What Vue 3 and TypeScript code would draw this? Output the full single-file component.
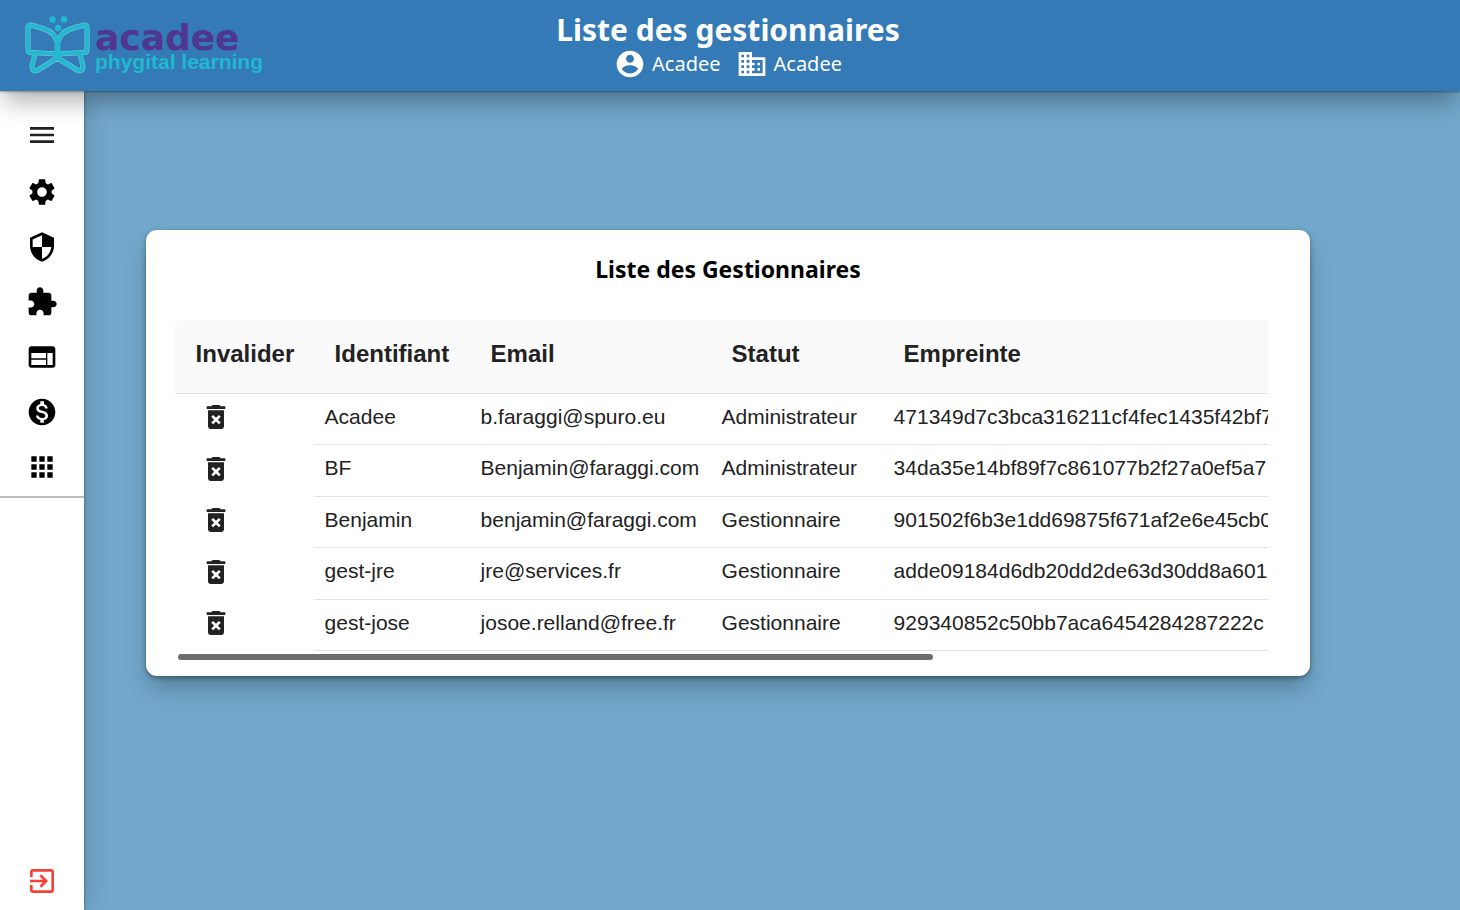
<script setup lang="ts">
import { computed, onBeforeUnmount, onMounted, ref } from 'vue'

interface Manager {
  id: string
  email: string
  status: string
  fingerprint: string
}

interface NavItem {
  label: string
  path: string
}

const navItems: NavItem[] = [
  {
    label: 'Paramètres',
    path: 'M19.14 12.94c.04-.3.06-.61.06-.94 0-.32-.02-.64-.07-.94l2.03-1.58c.18-.14.23-.41.12-.61l-1.92-3.32c-.12-.22-.37-.29-.59-.22l-2.39.96c-.5-.38-1.03-.7-1.62-.94l-.36-2.54c-.04-.24-.24-.41-.48-.41h-3.84c-.24 0-.43.17-.47.41l-.36 2.54c-.59.24-1.13.57-1.62.94l-2.39-.96c-.22-.08-.47 0-.59.22L2.74 8.87c-.12.21-.08.47.12.61l2.03 1.58c-.05.3-.09.63-.09.94s.02.64.07.94l-2.03 1.58c-.18.14-.23.41-.12.61l1.92 3.32c.12.22.37.29.59.22l2.39-.96c.5.38 1.03.7 1.62.94l.36 2.54c.05.24.24.41.48.41h3.84c.24 0 .44-.17.47-.41l.36-2.54c.59-.24 1.13-.56 1.62-.94l2.39.96c.22.08.47 0 .59-.22l1.92-3.32c.12-.22.07-.47-.12-.61l-2.01-1.58zM12 15.6c-1.98 0-3.6-1.62-3.6-3.6s1.62-3.6 3.6-3.6 3.6 1.62 3.6 3.6-1.62 3.6-3.6 3.6z',
  },
  {
    label: 'Sécurité',
    path: 'M12 1L3 5v6c0 5.55 3.84 10.74 9 12 5.16-1.26 9-6.45 9-12V5l-9-4zm0 10.99h7c-.53 4.12-3.28 7.79-7 8.94V12H5V6.3l7-3.11v8.8z',
  },
  {
    label: 'Extensions',
    path: 'M20.5 11H19V7c0-1.1-.9-2-2-2h-4V3.5C13 2.12 11.88 1 10.5 1S8 2.12 8 3.5V5H4c-1.1 0-1.99.9-1.99 2v3.8H3.5c1.49 0 2.7 1.21 2.7 2.7s-1.21 2.7-2.7 2.7H2V20c0 1.1.9 2 2 2h3.8v-1.5c0-1.49 1.21-2.7 2.7-2.7 1.49 0 2.7 1.21 2.7 2.7V22H17c1.1 0 2-.9 2-2v-4h1.5c1.38 0 2.5-1.12 2.5-2.5S21.88 11 20.5 11z',
  },
  {
    label: 'Pages',
    path: 'M20 4H4c-1.1 0-1.99.9-1.99 2L2 18c0 1.1.9 2 2 2h16c1.1 0 2-.9 2-2V6c0-1.1-.9-2-2-2zm-5 14H4v-4h11v4zm0-5H4V9h11v4zm5 5h-4V9h4v9z',
  },
  {
    label: 'Facturation',
    path: 'M12 2C6.48 2 2 6.48 2 12s4.48 10 10 10 10-4.48 10-10S17.52 2 12 2zm1.41 16.09V20h-2.67v-1.93c-1.71-.36-3.16-1.46-3.27-3.4h1.96c.1 1.05.82 1.87 2.65 1.87 1.96 0 2.4-.98 2.4-1.59 0-.83-.44-1.61-2.67-2.14-2.48-.6-4.18-1.62-4.18-3.67 0-1.72 1.39-2.84 3.11-3.21V4h2.67v1.95c1.86.45 2.79 1.86 2.85 3.39H14.3c-.05-1.11-.64-1.87-2.22-1.87-1.5 0-2.4.68-2.4 1.64 0 .84.65 1.39 2.67 1.91s4.18 1.39 4.18 3.91c-.01 1.83-1.38 2.83-3.12 3.16z',
  },
  {
    label: 'Applications',
    path: 'M4 8h4V4H4v4zm6 12h4v-4h-4v4zm-6 0h4v-4H4v4zm0-6h4v-4H4v4zm6 0h4v-4h-4v4zm6-10v4h4V4h-4zm-6 4h4V4h-4v4zm6 6h4v-4h-4v4zm0 6h4v-4h-4v4z',
  },
]

const managers: Manager[] = [
  { id: 'Acadee', email: 'b.faraggi@spuro.eu', status: 'Administrateur', fingerprint: '471349d7c3bca316211cf4fec1435f42bf7' },
  { id: 'BF', email: 'Benjamin@faraggi.com', status: 'Administrateur', fingerprint: '34da35e14bf89f7c861077b2f27a0ef5a7' },
  { id: 'Benjamin', email: 'benjamin@faraggi.com', status: 'Gestionnaire', fingerprint: '901502f6b3e1dd69875f671af2e6e45cb0' },
  { id: 'gest-jre', email: 'jre@services.fr', status: 'Gestionnaire', fingerprint: 'adde09184d6db20dd2de63d30dd8a601' },
  { id: 'gest-jose', email: 'josoe.relland@free.fr', status: 'Gestionnaire', fingerprint: '929340852c50bb7aca6454284287222c' },
]

const scroller = ref<HTMLElement | null>(null)
const visibleRatio = ref(1)
const offsetRatio = ref(0)

function measure(): void {
  const el = scroller.value
  if (!el) return
  visibleRatio.value = el.clientWidth / el.scrollWidth
  offsetRatio.value = el.scrollLeft / el.scrollWidth
}

const thumbStyle = computed(() => ({
  width: `${visibleRatio.value * 100}%`,
  marginLeft: `${offsetRatio.value * 100}%`,
}))

onMounted(() => {
  measure()
  window.addEventListener('resize', measure)
})
onBeforeUnmount(() => window.removeEventListener('resize', measure))
</script>

<template>
  <div class="page">
    <header class="topbar">
      <a class="logo" href="#" aria-label="Acadee phygital learning">
        <svg class="butterfly" viewBox="25 14 66 62" aria-hidden="true">
          <g class="wings halo">
            <path d="M57.5 54V42C56 34 51 30 43 27.500L31 24Q28 24 28 27V48Q28 51.500 31 51.500L57 53" />
            <path d="M57.5 54V42C59 34 64 30 72 27.500L84 24Q87 24 87 27V48Q87 51.500 84 51.500L58 53" />
            <path d="M35 53L32 65Q32 72 38 69L57.500 57L77 69Q83 72 83 65L80 53" />
          </g>
          <g class="wings">
            <path d="M57.5 54V42C56 34 51 30 43 27.500L31 24Q28 24 28 27V48Q28 51.500 31 51.500L57 53" />
            <path d="M57.5 54V42C59 34 64 30 72 27.500L84 24Q87 24 87 27V48Q87 51.500 84 51.500L58 53" />
            <path d="M35 53L32 65Q32 72 38 69L57.500 57L77 69Q83 72 83 65L80 53" />
          </g>
          <path class="body" d="M57.500 43V56" />
          <circle class="dot" cx="52.500" cy="18.500" r="3.200" />
          <circle class="dot" cx="64" cy="18.500" r="3.200" />
          <circle class="dot" cx="58" cy="27" r="3.200" />
        </svg>
        <span class="wordmark">
          <span class="brand">acadee</span>
          <span class="tagline">phygital learning</span>
        </span>
      </a>
      <div class="heading">
        <h1>Liste des gestionnaires</h1>
        <div class="identity">
          <span class="who">
            <svg class="icon" viewBox="0 0 24 24" aria-hidden="true">
              <path d="M12 2C6.480 2 2 6.480 2 12s4.480 10 10 10 10-4.480 10-10S17.520 2 12 2zm0 3c1.660 0 3 1.340 3 3s-1.340 3-3 3-3-1.340-3-3 1.340-3 3-3zm0 14.200c-2.500 0-4.710-1.280-6-3.220.03-1.990 4-3.080 6-3.080 1.990 0 5.970 1.090 6 3.080-1.290 1.940-3.500 3.220-6 3.220z" />
            </svg>
            Acadee
          </span>
          <span class="who">
            <svg class="icon" viewBox="0 0 24 24" aria-hidden="true">
              <path d="M12 7V3H2v18h20V7H12zM6 19H4v-2h2v2zm0-4H4v-2h2v2zm0-4H4V9h2v2zm0-4H4V5h2v2zm4 12H8v-2h2v2zm0-4H8v-2h2v2zm0-4H8V9h2v2zm0-4H8V5h2v2zm10 12h-8v-2h2v-2h-2v-2h2v-2h-2V9h8v10zm-2-8h-2v2h2v-2zm0 4h-2v2h2v-2z" />
            </svg>
            Acadee
          </span>
        </div>
      </div>
    </header>

    <nav class="sidebar" aria-label="Navigation">
      <button class="nav-button menu" type="button" aria-label="Menu">
        <svg class="icon" viewBox="0 0 24 24" aria-hidden="true">
          <path d="M3 18h18v-2H3v2zm0-5h18v-2H3v2zm0-7v2h18V6H3z" />
        </svg>
      </button>
      <div class="nav-group">
        <button v-for="item in navItems" :key="item.label" class="nav-button" type="button" :aria-label="item.label">
          <svg class="icon" viewBox="0 0 24 24" aria-hidden="true"><path :d="item.path" /></svg>
        </button>
      </div>
      <button class="nav-button logout" type="button" aria-label="Déconnexion">
        <svg class="icon" viewBox="0 0 24 24" aria-hidden="true">
          <path d="M10.090 15.590L11.500 17l5-5-5-5-1.410 1.410L12.670 11H3v2h9.670l-2.580 2.590zM19 3H5c-1.110 0-2 .9-2 2v4h2V5h14v14H5v-4H3v4c0 1.100.89 2 2 2h14c1.100 0 2-.9 2-2V5c0-1.100-.9-2-2-2z" />
        </svg>
      </button>
    </nav>

    <main class="content">
      <section class="card">
        <h2>Liste des Gestionnaires</h2>
        <div ref="scroller" class="scroller" @scroll="measure">
          <table>
            <thead>
              <tr>
                <th class="col-action" scope="col">Invalider</th>
                <th class="col-id" scope="col">Identifiant</th>
                <th class="col-email" scope="col">Email</th>
                <th class="col-status" scope="col">Statut</th>
                <th class="col-print" scope="col">Empreinte</th>
              </tr>
            </thead>
            <tbody>
              <tr v-for="manager in managers" :key="manager.id">
                <td class="action">
                  <button class="delete" type="button" :aria-label="`Invalider ${manager.id}`">
                    <svg class="icon" viewBox="0 0 24 24" aria-hidden="true">
                      <path d="M6 19c0 1.100.9 2 2 2h8c1.100 0 2-.9 2-2V7H6v12zm2.460-7.120l1.410-1.410L12 12.590l2.120-2.120 1.410 1.410L13.410 14l2.120 2.120-1.410 1.410L12 15.410l-2.120 2.120-1.410-1.410L10.590 14l-2.130-2.120zM15.500 4l-1-1h-5l-1 1H5v2h14V4z" />
                    </svg>
                  </button>
                </td>
                <td>{{ manager.id }}</td>
                <td>{{ manager.email }}</td>
                <td>{{ manager.status }}</td>
                <td>{{ manager.fingerprint }}</td>
              </tr>
            </tbody>
          </table>
        </div>
        <div class="track" aria-hidden="true">
          <div class="thumb" :style="thumbStyle"></div>
        </div>
      </section>
    </main>
  </div>
</template>

<style>
body {
  margin: 0;
}
</style>

<style scoped>
.page {
  display: grid;
  grid-template: auto 1fr / 84px 1fr;
  min-height: 100vh;
  background: #72a8cb;
  font-family: "Noto Sans", "Open Sans", sans-serif;
}

.icon {
  display: block;
  width: 32px;
  height: 32px;
  fill: currentColor;
}

button {
  padding: 0;
  border: 0;
  background: none;
  color: inherit;
  cursor: pointer;
}

.topbar {
  z-index: 3;
  grid-area: 1 / 1 / 2 / 3;
  display: grid;
  grid-template-columns: 1fr auto 1fr;
  align-items: center;
  box-sizing: border-box;
  min-height: 91px;
  padding: 0 29px 0 25px;
  background: #337ab7;
  color: #fff;
  box-shadow: 0 1px 2px rgba(0, 0, 0, 0.35), 0 14px 24px -4px rgba(0, 0, 0, 0.32);
}

.logo {
  display: flex;
  align-items: center;
  gap: 4px;
  justify-self: start;
  text-decoration: none;
}

.butterfly {
  width: 66px;
  height: 62px;
}

.wings {
  fill: none;
  stroke: #22b8d0;
  stroke-width: 4;
  stroke-linejoin: round;
  stroke-linecap: round;
}

.halo {
  stroke: #7fcbe0;
  stroke-width: 5;
}

.body {
  stroke: #22b8d0;
  stroke-width: 6;
  stroke-linecap: round;
}

.dot {
  fill: #22b8d0;
}

.wordmark {
  display: flex;
  flex-direction: column;
  padding-top: 2px;
  font-weight: 700;
}

.brand {
  color: #4f3690;
  font-family: "DejaVu Sans", sans-serif;
  font-size: 36px;
  line-height: 30px;
}

.tagline {
  color: #22b8d0;
  font-family: "Liberation Sans", Arial, sans-serif;
  font-size: 21px;
  line-height: 18px;
}

.heading {
  display: flex;
  flex-direction: column;
  align-items: center;
}

h1 {
  margin: 0;
  font-size: 30px;
  line-height: 36px;
}

.identity {
  display: flex;
  gap: 15px;
  font-size: 20px;
  line-height: 32px;
}

.who {
  display: flex;
  align-items: center;
  gap: 6px;
}

.sidebar {
  z-index: 2;
  grid-area: 2 / 1 / 3 / 2;
  display: flex;
  flex-direction: column;
  padding: 16px 0 2px;
  background: #fff;
  color: #000;
  box-shadow: 0 1px 3px rgba(0, 0, 0, 0.4), 2px 0 24px rgba(0, 0, 0, 0.16);
}

.nav-button {
  display: grid;
  place-items: center;
  width: 100%;
  height: 55px;
}

.menu {
  color: #212121;
}

.nav-group {
  padding: 2px 0;
  border-bottom: 2px solid #bdbdbd;
}

.logout {
  margin-top: auto;
  color: #f44336;
}

.content {
  z-index: 1;
  grid-area: 1 / 1 / 3 / 3;
  display: flex;
  align-items: center;
  justify-content: center;
  padding: 0 4px 4px 0;
}

.card {
  box-sizing: border-box;
  width: 80%;
  padding: 20px 42px 16px 29px;
  border-radius: 11px;
  background: #fff;
  box-shadow: 0 2px 5px rgba(0, 0, 0, 0.35), 0 14px 24px -3px rgba(0, 0, 0, 0.25);
}

h2 {
  margin: 0 -13px 32px 0;
  color: #000;
  font-size: 23px;
  line-height: 38px;
  text-align: center;
}

.scroller {
  overflow-x: auto;
  scrollbar-width: none;
  border-radius: 5px 0 0 0;
}

table {
  table-layout: fixed;
  width: 1575px;
  border-collapse: separate;
  border-spacing: 0;
  color: #222;
  font-family: "Liberation Sans", Arial, sans-serif;
  font-size: 21px;
  line-height: 24px;
}

th {
  box-sizing: border-box;
  height: 74px;
  padding: 0 21px 5px;
  border-bottom: 1px solid #e2e2e2;
  background: #fafafa;
  font-size: 24px;
  text-align: left;
}

.col-action {
  width: 139px;
}

.col-id {
  width: 156px;
}

.col-email {
  width: 241px;
}

.col-status {
  width: 172px;
}

td {
  box-sizing: border-box;
  height: 51px;
  padding: 0 11px 5px;
  border-bottom: 1px solid #e2e2e2;
  white-space: nowrap;
}

tr:nth-child(even) td {
  height: 52px;
}

.action {
  padding: 0 25px 5px;
  border-bottom: 0;
}

.delete {
  display: block;
}

.track {
  margin: 3px 3px 0;
}

.thumb {
  height: 6px;
  border-radius: 3px;
  background: #6e6e6e;
}
</style>
